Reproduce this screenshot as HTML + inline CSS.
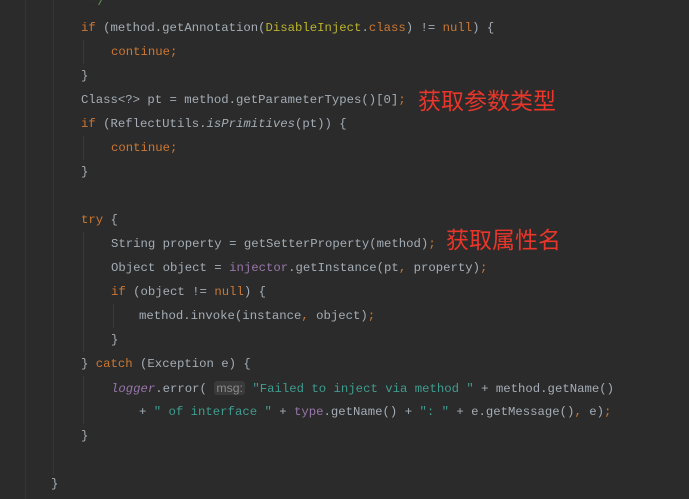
<!DOCTYPE html>
<html><head><meta charset="utf-8"><style>
body{margin:0;background:#2b2b2b;width:689px;height:499px;overflow:hidden;position:relative;font-family:"Liberation Mono",monospace;font-size:12.3px;color:#a4adb6}
.l{position:absolute;white-space:pre;height:24px;line-height:24px}
.k{color:#cc7832}.a{color:#bbb529}.p{color:#9876aa}.s{color:#3f9c8f}.i{font-style:italic}
.v{position:absolute;width:1px;background:#353535}
.g{position:absolute;width:1px;background:#3a3a3a}
.r{position:absolute;color:#e8362a;font-family:"Noto Sans CJK SC",sans-serif;font-size:23px;line-height:24px;white-space:nowrap}
.h{background:#3a3a3a;color:#8a8a8a;font-family:"Liberation Sans",sans-serif;border-radius:3px;padding:0 2px}
</style></head><body>
<div class="v" style="left:25px;top:0;height:499px"></div>
<div class="v" style="left:53px;top:0;height:475px"></div>
<div class="g" style="left:83px;top:40px;height:24px"></div>
<div class="g" style="left:83px;top:136px;height:24px"></div>
<div class="g" style="left:83px;top:232px;height:120px"></div>
<div class="g" style="left:113px;top:304px;height:24px"></div>
<div class="g" style="left:83px;top:376px;height:48px"></div>
<div class="l" style="left:90px;top:-10px;color:#629755">*/</div>
<div class="l" style="left:81px;top:16px"><span class="k">if</span> (method.getAnnotation(<span class="a">DisableInject</span>.<span class="k">class</span>) != <span class="k">null</span>) {</div>
<div class="l" style="left:111px;top:40px"><span class="k">continue;</span></div>
<div class="l" style="left:81px;top:64px">}</div>
<div class="l" style="left:81px;top:88px">Class&lt;?&gt; pt = method.getParameterTypes()[0]<span class="k">;</span></div>
<div class="l" style="left:81px;top:112px"><span class="k">if</span> (ReflectUtils.<span class="i">isPrimitives</span>(pt)) {</div>
<div class="l" style="left:111px;top:136px"><span class="k">continue;</span></div>
<div class="l" style="left:81px;top:160px">}</div>
<div class="l" style="left:81px;top:208px"><span class="k">try</span> {</div>
<div class="l" style="left:111px;top:232px">String property = getSetterProperty(method)<span class="k">;</span></div>
<div class="l" style="left:111px;top:256px">Object object = <span class="p">injector</span>.getInstance(pt<span class="k">,</span> property)<span class="k">;</span></div>
<div class="l" style="left:111px;top:280px"><span class="k">if</span> (object != <span class="k">null</span>) {</div>
<div class="l" style="left:139px;top:304px">method.invoke(instance<span class="k">,</span> object)<span class="k">;</span></div>
<div class="l" style="left:111px;top:328px">}</div>
<div class="l" style="left:81px;top:352px">} <span class="k">catch</span> (Exception e) {</div>
<div class="l" style="left:111px;top:376px"><span class="p i">logger</span>.error( <span class="h">msg:</span> <span class="s">"Failed to inject via method "</span> + method.getName()</div>
<div class="l" style="left:139px;top:400px">+ <span class="s">" of interface "</span> + <span class="p">type</span>.getName() + <span class="s">": "</span> + e.getMessage()<span class="k">,</span> e)<span class="k">;</span></div>
<div class="l" style="left:81px;top:424px">}</div>
<div class="l" style="left:51px;top:472px">}</div>
<div class="r" style="left:418px;top:87px">获取参数类型</div>
<div class="r" style="left:446px;top:226px">获取属性名</div>
</body></html>
